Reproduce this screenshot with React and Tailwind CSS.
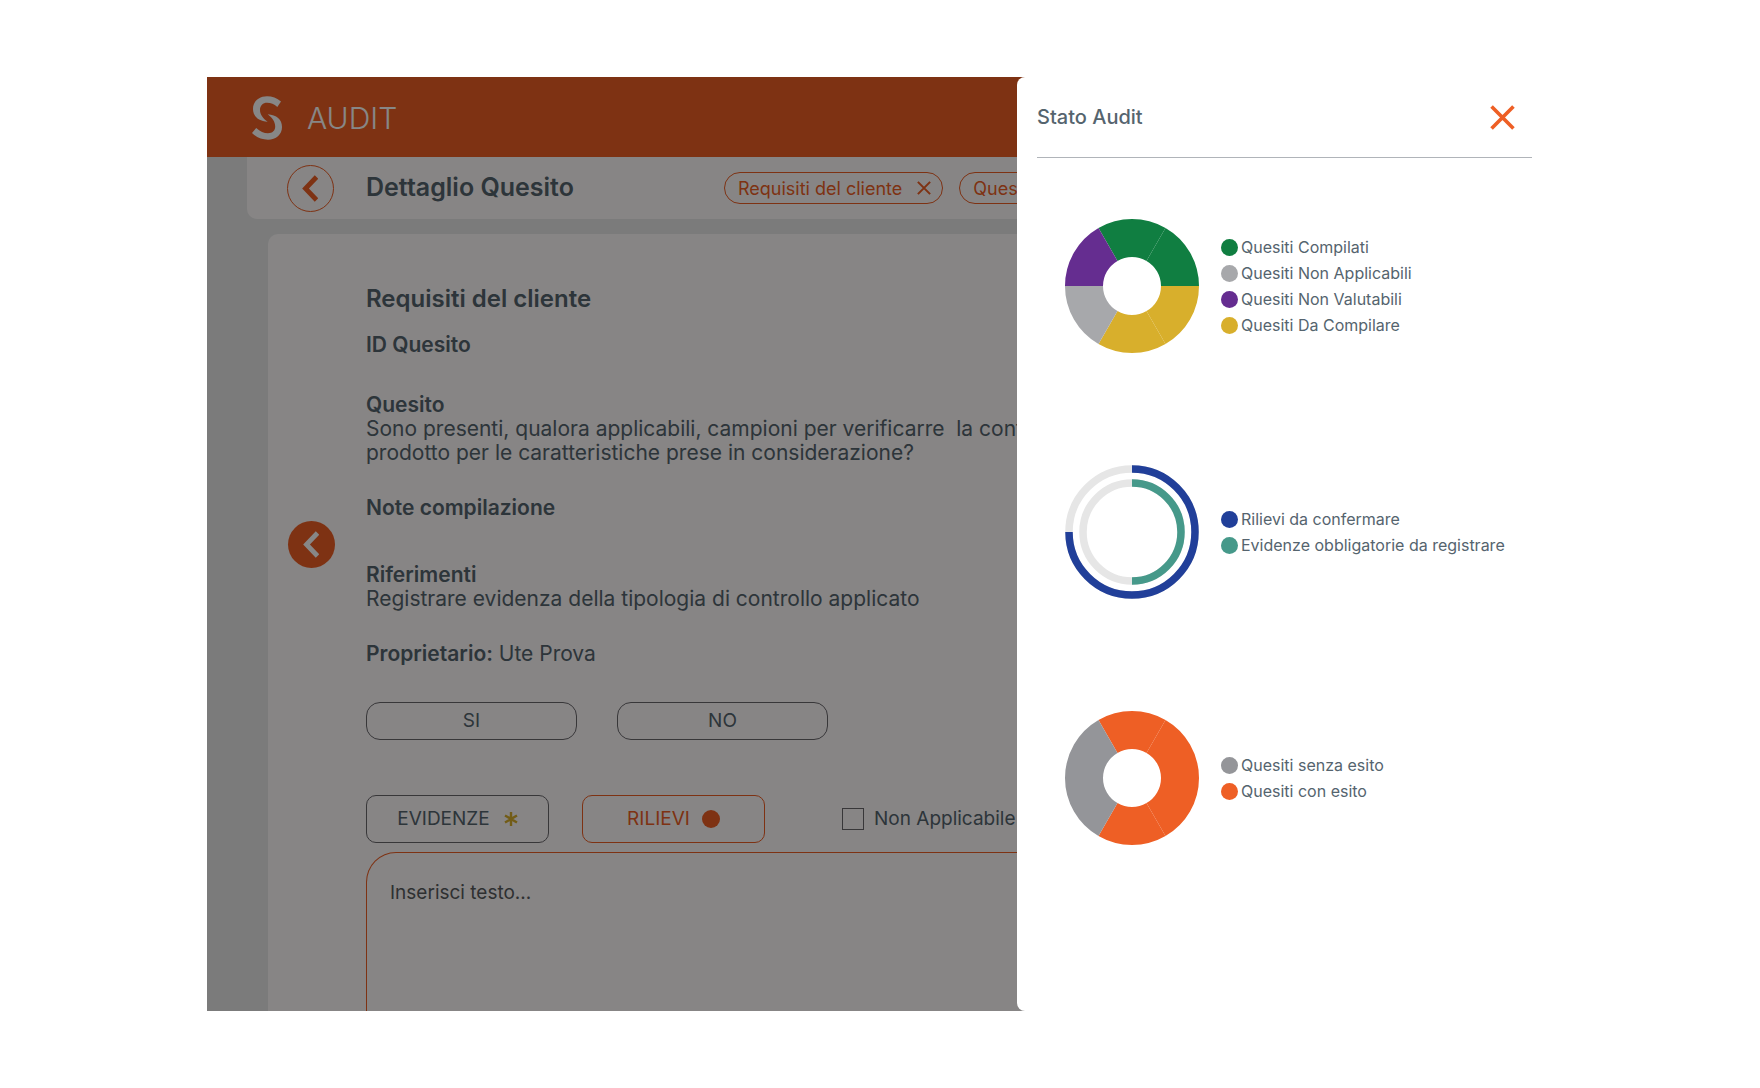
const ORANGE = "#ee5f25";

function Chevron() {
  return (
    <svg viewBox="0 0 16 27" className="h-[27px] w-4" aria-hidden="true">
      <path d="M14.500 2 3.500 13.500 14.500 25" fill="none" stroke="currentColor" strokeWidth="4.800" />
    </svg>
  );
}

function Cross({ className, width }) {
  return (
    <svg viewBox="0 0 24 24" className={className} aria-hidden="true">
      <path d="M1.500 1.500 22.500 22.500M22.500 1.500 1.500 22.500" fill="none" stroke="currentColor" strokeWidth={width} />
    </svg>
  );
}

function Logo() {
  return (
    <svg viewBox="0 0 30 44" className="h-11 w-[30px]" role="img" aria-label="Logo">
      <path
        fill="white"
        d="M29 5.500C25 2 20 .3 15 .3 6.500 .3 1 6 1 13 1 20.500 7 25.200 15.700 25.700 11 22.500 8 18.500 8 14 8 9.500 11 6.800 15 6.800 19 6.800 22 8.200 25.300 11Z"
      />
      <path
        fill="white"
        d="M15.700 18.300C24.500 18.800 30 23.500 30 31 30 38.500 24 43.700 16 43.700 10 43.700 4.500 41.500 0 37L4.200 32C8 35.500 12 37.200 16 37.200 20.500 37.200 23.200 34.500 23.200 30.500 23.200 26 20.500 22 15.700 18.300Z"
      />
    </svg>
  );
}

function Donut({ slices }) {
  const point = (radius, deg) => {
    const a = ((deg - 90) * Math.PI) / 180;
    return `${67 + radius * Math.cos(a)} ${67 + radius * Math.sin(a)}`;
  };
  return (
    <svg viewBox="0 0 134 134" className="size-[134px] shrink-0" aria-hidden="true">
      {slices.map((color, i) => {
        const from = i * 60 - 30;
        const to = from + 60;
        return (
          <path
            key={i}
            fill={color}
            d={`M${point(67, from)}A67 67 0 0 1 ${point(67, to)}L${point(29, to)}A29 29 0 0 0 ${point(29, from)}Z`}
          />
        );
      })}
    </svg>
  );
}

function Rings() {
  return (
    <svg viewBox="0 0 134 134" className="size-[134px] shrink-0" fill="none" strokeWidth="7.500" aria-hidden="true">
      <circle cx="67" cy="67" r="63" stroke="#e6e6e6" />
      <circle cx="67" cy="67" r="49" stroke="#e6e6e6" />
      <path d="M67 4A63 63 0 1 1 4 67" stroke="#213f99" />
      <path d="M67 18A49 49 0 0 1 67 116" stroke="#46998a" />
    </svg>
  );
}

function StatusRow({ chart, items }) {
  return (
    <section className="flex items-center gap-[22px]">
      {chart}
      <ul className="flex flex-col">
        {items.map(([color, label]) => (
          <li key={label} className="flex items-center gap-[3px] text-[16px] leading-[26px] whitespace-nowrap">
            <span className="size-[17px] rounded-full" style={{ backgroundColor: color }} />
            {label}
          </li>
        ))}
      </ul>
    </section>
  );
}

function Tag({ children }) {
  return (
    <button className="flex h-8 items-center gap-[15px] rounded-full border border-[#ee5f25] pr-[11px] pl-[13px] text-[18px] whitespace-nowrap text-[#ee5f25]">
      {children}
      <Cross className="size-[14px]" width="3.500" />
    </button>
  );
}

function Answer({ children }) {
  return (
    <button className="h-[38px] w-[211px] rounded-[14px] border border-[#6a686d] text-[19px]">{children}</button>
  );
}

export default function App() {
  return (
    <div className="flex h-screen flex-col bg-white px-[207px] pt-[77px] pb-[77px] font-[Inter,sans-serif] text-[#55646e]">
      <div className="relative flex min-h-0 flex-1 flex-col overflow-hidden bg-[#e8e9e9]">
        <header className="flex h-20 shrink-0 items-center gap-[25px] bg-[#ee5f25] pt-[2px] pl-[45px] text-white">
          <Logo />
          <span className="text-[30px] font-light">AUDIT</span>
        </header>

        <div className="ml-10 flex h-[62px] shrink-0 items-center rounded-bl-[10px] bg-[#fffbfb] pl-10">
          <button
            aria-label="Indietro"
            className="flex size-[47px] items-center justify-center rounded-full border border-[#ee5f25] pr-[2px] text-[#ee5f25]"
          >
            <Chevron />
          </button>
          <h1 className="ml-8 w-[358px] text-[25px] font-semibold">Dettaglio Quesito</h1>
          <div className="flex gap-4">
            <Tag>Requisiti del cliente</Tag>
            <Tag>Quesito</Tag>
          </div>
        </div>

        <main className="mt-[15px] ml-[61px] flex min-h-0 flex-1 rounded-tl-[10px] bg-[#fffbfb] pl-5">
          <button
            aria-label="Quesito precedente"
            className="mt-[287px] mr-[31px] flex size-[47px] shrink-0 items-center justify-center rounded-full bg-[#ee5f25] pr-[2px] text-white"
          >
            <Chevron />
          </button>
          <div className="flex min-w-0 flex-1 flex-col text-[21px] leading-6">
            <h2 className="mt-[53px] text-[24px] font-semibold">Requisiti del cliente</h2>
            <h3 className="mt-[22px] font-semibold">ID Quesito</h3>
            <h3 className="mt-9 font-semibold">Quesito</h3>
            <p className="whitespace-pre">
              {"Sono presenti, qualora applicabili, campioni per verificarre  la conformità del\nprodotto per le caratteristiche prese in considerazione?"}
            </p>
            <h3 className="mt-[31px] font-semibold">Note compilazione</h3>
            <h3 className="mt-[43px] font-semibold">Riferimenti</h3>
            <p>Registrare evidenza della tipologia di controllo applicato</p>
            <p className="mt-[31px]">
              <strong className="font-semibold">Proprietario:</strong> Ute Prova
            </p>
            <div className="mt-9 flex gap-10">
              <Answer>SI</Answer>
              <Answer>NO</Answer>
            </div>
            <div className="mt-[55px] flex items-center text-[19px]">
              <button className="flex h-12 w-[183px] items-center justify-center gap-[14px] rounded-[10px] border border-[#6a686d]">
                EVIDENZE
                <svg viewBox="0 0 14 14" className="size-[14px]" aria-hidden="true">
                  <path d="M7 0V14M1 3.500 13 10.500M13 3.500 1 10.500" stroke="#d8af2c" strokeWidth="2.400" />
                </svg>
              </button>
              <button className="ml-[33px] flex h-12 w-[183px] items-center justify-center gap-3 rounded-[10px] border border-[#ee5f25] text-[#ee5f25]">
                RILIEVI
                <span className="size-[18px] rounded-full bg-[#ee5f25]" />
              </button>
              <label className="ml-[77px] flex items-center gap-[10px] whitespace-nowrap">
                <input type="checkbox" className="size-[22px] appearance-none border border-[#6a686d]" />
                Non Applicabile
              </label>
            </div>
            <textarea
              aria-label="Testo"
              placeholder="Inserisci testo..."
              className="mt-[9px] min-h-0 flex-1 resize-none rounded-tl-[30px] border border-b-0 border-[#ee5f25] px-[23px] pt-7 text-[19px] placeholder:text-[#585c5e]"
            />
          </div>
        </main>

        <div className="absolute inset-0 bg-black/47" />

        <aside
          role="dialog"
          aria-label="Stato Audit"
          className="absolute inset-y-0 right-0 w-[536px] rounded-l-lg bg-white pr-[21px] pl-5"
        >
          <div className="flex h-[81px] items-center justify-between border-b border-[#b0b4b9] pr-[17px]">
            <h2 className="text-[20px] font-medium">Stato Audit</h2>
            <button aria-label="Chiudi" className="text-[#ee5f25]">
              <Cross className="size-[25px]" width="3.500" />
            </button>
          </div>
          <div className="flex flex-col gap-28 pt-[61px] pl-7">
            <StatusRow
              chart={<Donut slices={["#107e41", "#107e41", "#d8af2c", "#d8af2c", "#a7a8ab", "#652d90"]} />}
              items={[
                ["#107e41", "Quesiti Compilati"],
                ["#a7a8ab", "Quesiti Non Applicabili"],
                ["#652d90", "Quesiti Non Valutabili"],
                ["#d8af2c", "Quesiti Da Compilare"],
              ]}
            />
            <StatusRow
              chart={<Rings />}
              items={[
                ["#213f99", "Rilievi da confermare"],
                ["#46998a", "Evidenze obbligatorie da registrare"],
              ]}
            />
            <StatusRow
              chart={<Donut slices={[ORANGE, ORANGE, ORANGE, ORANGE, "#949599", "#949599"]} />}
              items={[
                ["#949599", "Quesiti senza esito"],
                [ORANGE, "Quesiti con esito"],
              ]}
            />
          </div>
        </aside>
      </div>
    </div>
  );
}
